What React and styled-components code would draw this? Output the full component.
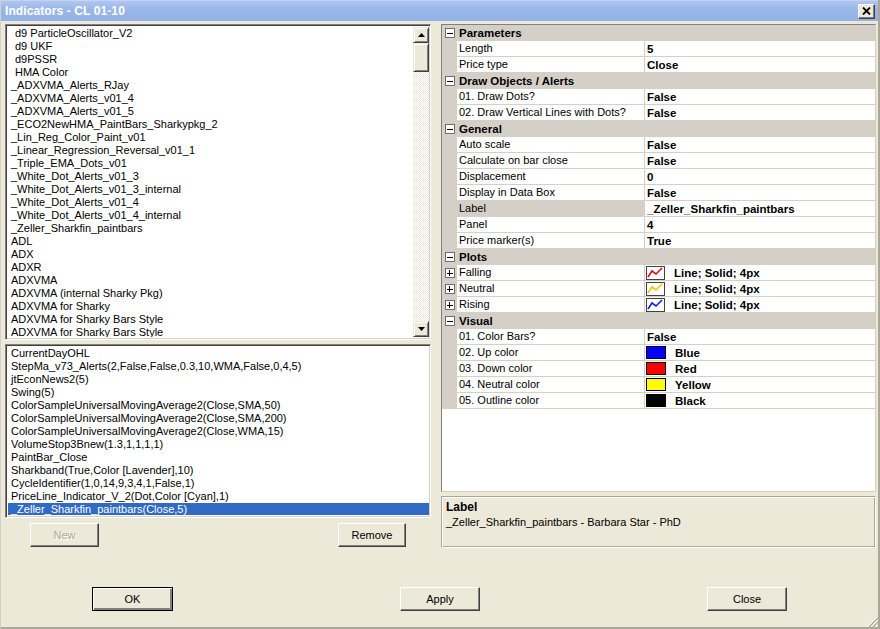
import React from "react";
import styled, { createGlobalStyle } from "styled-components";

const GlobalStyle = createGlobalStyle`
  html, body { margin: 0; padding: 0; background: #ece9d8; }
  body {
    font-family: "Liberation Sans", Arial, sans-serif;
    font-size: 11px;
    color: #000;
  }
  * { box-sizing: border-box; }
`;

const Window = styled.div`
  position: relative;
  width: 880px;
  height: 629px;
  display: flex;
  flex-direction: column;
  background: #ece9d8;
  border-left: 1px solid #d4d0c8;
  border-right: 2px solid #aca899;
  border-bottom: 2px solid #aca899;
`;

const TitleBar = styled.div`
  height: 21px;
  display: flex;
  align-items: center;
  justify-content: space-between;
  padding: 0 3px 0 4px;
  background: linear-gradient(#b0c6f0, #9bb7e9 40%, #94b1e6);
  border-top: 1px solid #c4d4f4;
  color: #fff;
  font-weight: bold;
  font-size: 12px;
  letter-spacing: 0.1px;
`;

const CloseButton = styled.div`
  width: 17px;
  height: 15px;
  display: flex;
  align-items: center;
  justify-content: center;
  background: #ece9d8;
  border: 1px solid;
  border-color: #fff #404040 #404040 #fff;
  box-shadow: inset -1px -1px #808080;
`;

const Content = styled.div`
  display: flex;
  gap: 10px;
  padding: 3px 0 0 4px;
`;

const LeftCol = styled.div`
  width: 426px;
  display: flex;
  flex-direction: column;
`;

const RightCol = styled.div`
  width: 435px;
  display: flex;
  flex-direction: column;
  gap: 4px;
`;

const ListBox = styled.div`
  height: ${(p) => p.$h}px;
  margin-bottom: ${(p) => p.$mb || 0}px;
  display: flex;
  background: #fff;
  border: 1px solid;
  border-color: #808080 #fff #fff #808080;
  box-shadow: inset 1px 1px #404040, inset -1px -1px #d4d0c8;
  padding: 2px 1px 2px 2px;
`;

const Items = styled.div`
  flex: 1;
  overflow: hidden;
`;

const Item = styled.div`
  height: 13px;
  line-height: 13px;
  padding-left: ${(p) => (p.$indent ? 7 : 3)}px;
  white-space: pre;
  background: ${(p) => (p.$selected ? "#316ac5" : "transparent")};
  color: ${(p) => (p.$selected ? "#fff" : "#000")};
`;

const ScrollBar = styled.div`
  width: 16px;
  display: flex;
  flex-direction: column;
  background: repeating-conic-gradient(#fff 0 25%, #ece9d8 0 50%) 0 0 / 2px 2px;
`;

const ScrollBtn = styled.div`
  width: 16px;
  height: ${(p) => p.$h || 16}px;
  display: flex;
  align-items: center;
  justify-content: center;
  background: #ece9d8;
  border: 1px solid;
  border-color: #ece9d8 #404040 #404040 #ece9d8;
  box-shadow: inset 1px 1px #fff, inset -1px -1px #808080;
  margin-bottom: ${(p) => (p.$thumb ? "auto" : 0)};
`;

const ButtonRow = styled.div`
  display: flex;
  justify-content: space-between;
  padding: 0 25px;
`;

const Button = styled.button`
  width: ${(p) => p.$w || 70}px;
  height: 24px;
  padding: 0;
  font-family: "Liberation Sans", Arial, sans-serif;
  font-size: 11px;
  color: ${(p) => (p.disabled ? "#aca899" : "#000")};
  text-shadow: ${(p) => (p.disabled ? "1px 1px #fff" : "none")};
  background: #ece9d8;
  border: 1px solid;
  border-color: ${(p) =>
    p.$default ? "#000" : "#fff #404040 #404040 #fff"};
  box-shadow: ${(p) =>
    p.$default
      ? "inset 1px 1px #fff, inset -2px -2px #808080"
      : "inset -1px -1px #808080"};
`;

const PropGrid = styled.div`
  height: 468px;
  background: #fff;
  border: 1px solid;
  border-color: #808080 #d4d0c8 #d4d0c8 #808080;
`;

const Category = styled.div`
  height: 16px;
  display: flex;
  align-items: center;
  background: #d4d0c8;
  font-weight: bold;
  font-size: 11.5px;
`;

const Gutter = styled.div`
  width: 15px;
  height: 16px;
  flex-shrink: 0;
  display: flex;
  align-items: center;
  justify-content: center;
  background: #d4d0c8;
`;

const Toggle = styled.div`
  width: 10px;
  height: 10px;
  border: 1px solid #6f6f6f;
  background: #fff;
  position: relative;
  &::before {
    content: "";
    position: absolute;
    left: 1px;
    top: 3.5px;
    width: 6px;
    height: 1px;
    background: #000;
  }
  &::after {
    content: "";
    display: ${(p) => (p.$plus ? "block" : "none")};
    position: absolute;
    left: 3.5px;
    top: 1px;
    width: 1px;
    height: 6px;
    background: #000;
  }
`;

const CatLabel = styled.div`
  padding-left: 2px;
`;

const Row = styled.div`
  height: 16px;
  display: flex;
`;

const NameCell = styled.div`
  width: 188px;
  padding-left: 2px;
  line-height: 15px;
  border-bottom: 1px solid #d4d0c8;
  border-right: 1px solid #d4d0c8;
  background: ${(p) => (p.$selected ? "#d4d0c8" : "#fff")};
  white-space: nowrap;
`;

const ValueCell = styled.div`
  flex: 1;
  display: flex;
  align-items: center;
  gap: 9px;
  padding-left: ${(p) => (p.$lead ? 1 : 2)}px;
  border-bottom: 1px solid #d4d0c8;
  font-weight: bold;
  font-size: 11.5px;
  white-space: nowrap;
`;

const Swatch = styled.div`
  width: 20px;
  height: 13px;
  border: 1px solid #000;
  background: ${(p) => p.$color};
`;

const Description = styled.div`
  height: 52px;
  border: 1px solid;
  border-color: #aca899 #fff #fff #aca899;
  box-shadow: inset 1px 1px #fff, inset -1px -1px #aca899;
  padding: 3px 4px;
`;

const DescTitle = styled.div`
  font-weight: bold;
  font-size: 12px;
  line-height: 15px;
`;

const DescText = styled.div`
  line-height: 15px;
`;

const Footer = styled.div`
  display: flex;
  justify-content: space-between;
  padding: 39px 91px 0 91px;
`;

const Grip = styled.svg`
  position: absolute;
  right: 0;
  bottom: 0;
`;

const topItems = [
  [" d9 ParticleOscillator_V2", true],
  ["d9 UKF", true],
  ["d9PSSR", true],
  [" HMA Color", true],
  ["_ADXVMA_Alerts_RJay"],
  ["_ADXVMA_Alerts_v01_4"],
  ["_ADXVMA_Alerts_v01_5"],
  ["_ECO2NewHMA_PaintBars_Sharkypkg_2"],
  ["_Lin_Reg_Color_Paint_v01"],
  ["_Linear_Regression_Reversal_v01_1"],
  ["_Triple_EMA_Dots_v01"],
  ["_White_Dot_Alerts_v01_3"],
  ["_White_Dot_Alerts_v01_3_internal"],
  ["_White_Dot_Alerts_v01_4"],
  ["_White_Dot_Alerts_v01_4_internal"],
  ["_Zeller_Sharkfin_paintbars"],
  ["ADL"],
  ["ADX"],
  ["ADXR"],
  ["ADXVMA"],
  ["ADXVMA (internal Sharky Pkg)"],
  ["ADXVMA for Sharky"],
  ["ADXVMA for Sharky Bars Style"],
  ["ADXVMA for Sharky Bars Style"],
];

const usedItems = [
  "CurrentDayOHL",
  "StepMa_v73_Alerts(2,False,False,0.3,10,WMA,False,0,4,5)",
  "jtEconNews2(5)",
  "Swing(5)",
  "ColorSampleUniversalMovingAverage2(Close,SMA,50)",
  "ColorSampleUniversalMovingAverage2(Close,SMA,200)",
  "ColorSampleUniversalMovingAverage2(Close,WMA,15)",
  "VolumeStop3Bnew(1.3,1,1,1,1)",
  "PaintBar_Close",
  "Sharkband(True,Color [Lavender],10)",
  "CycleIdentifier(1,0,14,9,3,4,1,False,1)",
  "PriceLine_Indicator_V_2(Dot,Color [Cyan],1)",
  "_Zeller_Sharkfin_paintbars(Close,5)",
];

const sections = [
  {
    title: "Parameters",
    rows: [
      { name: "Length", value: "5" },
      { name: "Price type", value: "Close" },
    ],
  },
  {
    title: "Draw Objects / Alerts",
    rows: [
      { name: "01. Draw Dots?", value: "False" },
      { name: "02. Draw Vertical Lines with Dots?", value: "False" },
    ],
  },
  {
    title: "General",
    rows: [
      { name: "Auto scale", value: "False" },
      { name: "Calculate on bar close", value: "False" },
      { name: "Displacement", value: "0" },
      { name: "Display in Data Box", value: "False" },
      { name: "Label", value: "_Zeller_Sharkfin_paintbars", selected: true },
      { name: "Panel", value: "4" },
      { name: "Price marker(s)", value: "True" },
    ],
  },
  {
    title: "Plots",
    rows: [
      { name: "Falling", value: "Line; Solid; 4px", plot: "#e01010", expand: true },
      { name: "Neutral", value: "Line; Solid; 4px", plot: "#f0c800", expand: true },
      { name: "Rising", value: "Line; Solid; 4px", plot: "#1020e0", expand: true },
    ],
  },
  {
    title: "Visual",
    rows: [
      { name: "01. Color Bars?", value: "False" },
      { name: "02. Up color", value: "Blue", color: "#0000ff" },
      { name: "03. Down color", value: "Red", color: "#ff0000" },
      { name: "04. Neutral color", value: "Yellow", color: "#ffff00" },
      { name: "05. Outline color", value: "Black", color: "#000000" },
    ],
  },
];

const Arrow = ({ down }) => (
  <svg width="7" height="4" viewBox="0 0 7 4">
    <polygon points={down ? "0,0 7,0 3.5,4" : "0,4 7,4 3.5,0"} fill="#000" />
  </svg>
);

const PlotIcon = ({ color }) => (
  <svg width="19" height="14" viewBox="0 0 19 14">
    <rect x="0.5" y="0.5" width="18" height="13" fill="#fff" stroke="#404040" />
    <polyline
      points="2,11 6,5 10,8 16,2"
      fill="none"
      stroke={color}
      strokeWidth="1.6"
    />
  </svg>
);

const PropRow = ({ row }) => (
  <Row>
    <Gutter>{row.expand && <Toggle $plus />}</Gutter>
    <NameCell $selected={row.selected}>{row.name}</NameCell>
    <ValueCell $lead={row.plot || row.color}>
      {row.plot && <PlotIcon color={row.plot} />}
      {row.color && <Swatch $color={row.color} />}
      {row.value}
    </ValueCell>
  </Row>
);

const App = () => {
  return (
    <>
      <GlobalStyle />
      <Window>
        <TitleBar>
          <span>Indicators - CL 01-10</span>
          <CloseButton>
            <svg width="9" height="8" viewBox="0 0 9 8">
              <path d="M1 0.5 L8 7.5 M8 0.5 L1 7.5" stroke="#000" strokeWidth="1.8" />
            </svg>
          </CloseButton>
        </TitleBar>
        <Content>
          <LeftCol>
            <ListBox $h={316} $mb={4}>
              <Items>
                {topItems.map(([name, indent], i) => (
                  <Item key={i} $indent={indent}>
                    {name.trim()}
                  </Item>
                ))}
              </Items>
              <ScrollBar>
                <ScrollBtn>
                  <Arrow />
                </ScrollBtn>
                <ScrollBtn $h={29} $thumb />
                <ScrollBtn>
                  <Arrow down />
                </ScrollBtn>
              </ScrollBar>
            </ListBox>
            <ListBox $h={174} $mb={5}>
              <Items>
                {usedItems.map((name, i) => (
                  <Item key={i} $selected={i === usedItems.length - 1}>
                    {name}
                  </Item>
                ))}
              </Items>
            </ListBox>
            <ButtonRow>
              <Button disabled $w={69}>New</Button>
              <Button $w={68}>Remove</Button>
            </ButtonRow>
          </LeftCol>
          <RightCol>
            <PropGrid>
              {sections.map((s) => (
                <React.Fragment key={s.title}>
                  <Category>
                    <Gutter>
                      <Toggle />
                    </Gutter>
                    <CatLabel>{s.title}</CatLabel>
                  </Category>
                  {s.rows.map((r) => (
                    <PropRow key={r.name} row={r} />
                  ))}
                </React.Fragment>
              ))}
            </PropGrid>
            <Description>
              <DescTitle>Label</DescTitle>
              <DescText>_Zeller_Sharkfin_paintbars - Barbara Star - PhD</DescText>
            </Description>
          </RightCol>
        </Content>
        <Footer>
          <Button $default $w={81}>OK</Button>
          <Button $w={80}>Apply</Button>
          <Button $w={80}>Close</Button>
        </Footer>
        <Grip width="12" height="12" viewBox="0 0 12 12">
          <path d="M11 2 L2 11 M11 6 L6 11 M11 10 L10 11" stroke="#fff" strokeWidth="1" />
          <path d="M12 3 L3 12 M12 7 L7 12" stroke="#aca899" strokeWidth="1.2" />
        </Grip>
      </Window>
    </>
  );
};

export default App;
